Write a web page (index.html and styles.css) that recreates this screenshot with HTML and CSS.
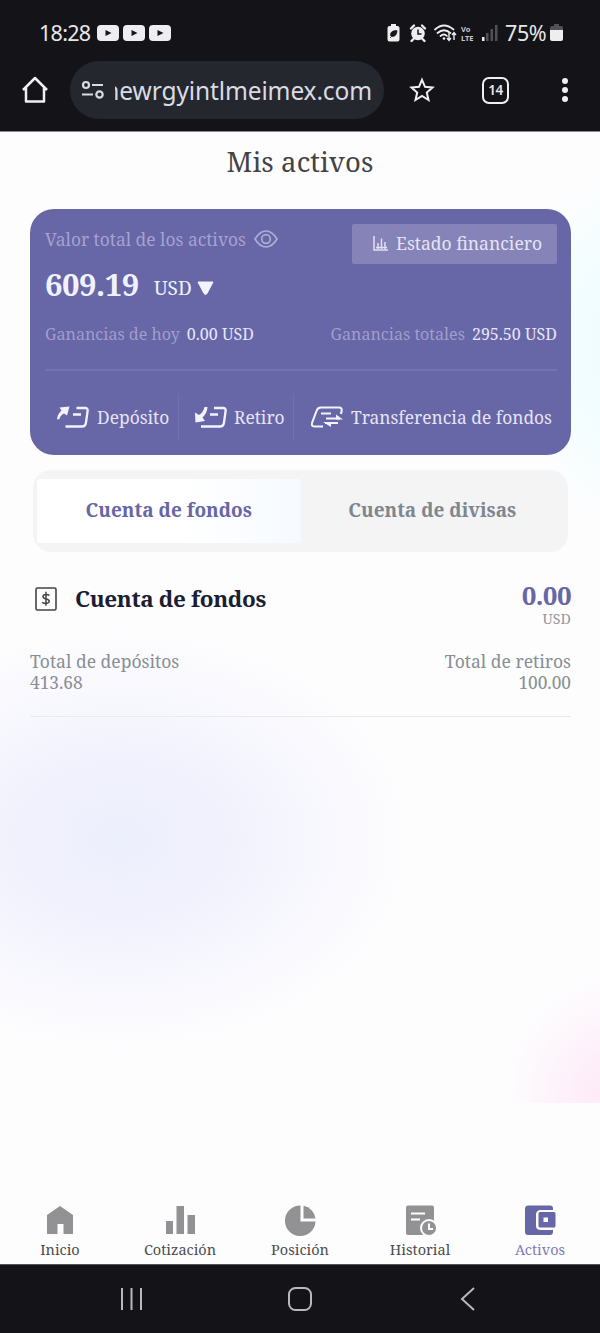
FILE: index.html
```html
<!DOCTYPE html>
<html lang="es">
<head>
<meta charset="utf-8">
<title>Mis activos</title>
<link rel="stylesheet" href="styles.css">
</head>
<body>
<div class="phone">
  <header class="chrome">
    <div class="status">
      <span class="clock">18:28</span>
      <svg class="yt" width="74" height="16" viewBox="0 0 74 16"><g fill="#eeeef0"><rect width="22" height="16" rx="4"/><rect x="26" width="22" height="16" rx="4"/><rect x="52" width="22" height="16" rx="4"/></g><g fill="#15151a"><path d="M8.500 5l6 3-6 3zM34.500 5l6 3-6 3zM60.500 5l6 3-6 3z"/></g></svg>
      <svg class="signals" width="112" height="20" viewBox="0 0 112 20">
        <g fill="#eeeef0"><path d="M4 1h5v2h1.500q2 0 2 2v11.500q0 2-2 2h-8q-2 0-2-2v-11.500q0-2 2-2H4z"/></g>
        <path d="M3.500 12.500q-.5-5 6.500-5 0 6-5 6zM3 15l4-4" fill="#15151a" stroke="#15151a" stroke-width=".7"/>
        <circle cx="31" cy="10.500" r="6.800" fill="#eeeef0"/><path d="M24 5.500l3-3M38 5.500l-3-3M26.500 16l-2 2M35.500 16l2 2" stroke="#eeeef0" stroke-width="2.400" stroke-linecap="round"/><path d="M31 6.500v4.500h3.500" fill="none" stroke="#15151a" stroke-width="1.500"/>
        <g fill="none" stroke="#eeeef0" stroke-width="1.700" stroke-linecap="round"><path d="M48 6.500q9-8 18.500 0M50.500 10q6.500-5.500 13 0M53.500 13q3.500-3 6.500 0"/></g><circle cx="57" cy="15.500" r="1.300" fill="#eeeef0"/>
        <path d="M62 10v7m-2-2l2 2.500 2-2.500M67 17v-7m-2 2l2-2.500 2 2.500" fill="none" stroke="#eeeef0" stroke-width="1.400"/>
        <text class="volte" x="74" y="9">Vo</text><text class="volte" x="74" y="17.500">LTE</text>
        <path d="M95 14h2.500v4H95z" fill="#eeeef0"/><path d="M99 10h2.500v8H99zM103.500 6h2.500v12h-2.500zM108 2h2.500v16H108z" fill="#505055"/>
      </svg>
      <span class="percent">75%</span>
      <svg class="battery" width="13" height="17" viewBox="0 0 13 17"><path d="M4 0h5v2h2q2 0 2 2v3H0V4q0-2 2-2h2z" fill="#505055"/><path d="M0 6h13v9q0 2-2 2H2q-2 0-2-2z" fill="#eeeef0"/></svg>
    </div>
    <div class="toolbar">
      <svg class="home" width="28" height="28" viewBox="0 0 28 28" fill="none" stroke="#f0f0f2" stroke-width="2.500" stroke-linejoin="round"><path d="M2 14L14 2l12 12M5 12v13.500h18V12"/></svg>
      <div class="urlbar">
        <svg width="24" height="20" viewBox="0 0 24 20" fill="none" stroke="#d8dbe2" stroke-width="2.200"><circle cx="5" cy="5" r="3"/><path d="M11 5h11M1 14.500h11"/><circle cx="18.500" cy="14.500" r="3.200"/></svg>
        <div class="urlclip"><span class="url">newrgyintlmeimex.com</span></div>
      </div>
      <svg class="star" width="26" height="26" viewBox="0 0 26 26" fill="none" stroke="#f0f0f2" stroke-width="2"><path d="M13 2.800l3 7 7.500.7-5.700 5 1.700 7.500-6.500-4-6.500 4 1.700-7.500-5.700-5 7.500-.7z"/></svg>
      <div class="count">14</div>
      <svg class="more" width="8" height="26" viewBox="0 0 8 26" fill="#f0f0f2"><circle cx="4" cy="4" r="3"/><circle cx="4" cy="13" r="3"/><circle cx="4" cy="22" r="3"/></svg>
    </div>
  </header>

  <main class="app">
    <h1 class="title"><span>Mis activos</span></h1>
    <section class="card">
      <div class="card-top">
        <div>
          <div class="label-row"><span class="total-label">Valor total de los activos</span>
            <svg width="24" height="18" viewBox="0 0 24 18" fill="none" stroke="#b0add5" stroke-width="1.700"><path d="M1 9Q6 1 12 1t11 8q-5 8-11 8T1 9z"/><circle cx="12" cy="9" r="4.300"/></svg></div>
          <div class="balance-row"><span class="balance">609.19</span><span class="currency">USD</span><svg width="17" height="15" viewBox="0 0 17 15"><path d="M1 1h15L10 12.500q-1.500 2-3 0z" fill="#f2f5ff" stroke="#f2f5ff" stroke-linejoin="round"/></svg></div>
        </div>
        <div class="report"><svg width="16" height="16" viewBox="0 0 16 16" fill="none" stroke="#e2e0f3" stroke-width="1.500"><path d="M1 1v14h14M5 14V8M8.500 14V3.500M12 14V7"/><path d="M3 12.500h11"/></svg><span>Estado financiero</span></div>
      </div>
      <div class="gains"><p><span class="dim">Ganancias de hoy</span><span class="lit">0.00 USD</span></p><p><span class="dim">Ganancias totales</span><span class="lit">295.50 USD</span></p></div>
      <div class="actions">
        <div class="action a1"><svg width="32" height="22" viewBox="0 0 32 22" fill="none" stroke="#f2f3ff" stroke-width="2.300"><path d="M0 13.500Q.5 8 4.500 4.500L2.500 1.500 12.500 0.500 10 9.500 7 7.500Q3 9.500 2.500 13z" fill="#f2f3ff" stroke="none"/><path d="M19.500 2H28q3 0 2.600 3L29 16.500q-.5 4-4 4H8.500M16 8.500h8"/></svg><span>Depósito</span></div>
        <div class="action a2"><svg width="32" height="22" viewBox="0 0 32 22" fill="none" stroke="#f2f3ff" stroke-width="2.300"><path d="M9.500 1h3q-.5 6.500-5 10.500l2.500 3.500-9.500 1.500L0 6.500l4 2.500Q8.500 6 9.500 1z" fill="#f2f3ff" stroke="none"/><path d="M19 2h9q3 0 2.600 3L29 16.500q-.5 4-4 4H6M15 8.500h8"/></svg><span>Retiro</span></div>
        <div class="action a3"><svg width="32" height="22" viewBox="0 0 32 22" fill="none" stroke="#f2f3ff" stroke-width="2.100"><path d="M12 20.500H4q-4 0-3-3.500L5.500 5q1-3.500 4.500-3.500h18q3.500 0 2.500 4L30 8M10 7.500h10M15 12.500h14M27 17H14"/><path d="M25 8.500l7 5h-7zM12 16h8v5z" fill="#f2f3ff" stroke="none"/></svg><span>Transferencia de fondos</span></div>
      </div>
    </section>
    <div class="tabs"><div class="tab active"><span>Cuenta de fondos</span></div><div class="tab"><span>Cuenta de divisas</span></div></div>
    <section class="account">
      <div class="account-head">
        <svg class="money" width="22" height="24" viewBox="0 0 22 24"><rect x="1" y="1" width="20" height="22" rx="1.500" fill="none" stroke="#444" stroke-width="1.600"/><path d="M14.500 8.500Q13.500 7.500 11 7.500q-3 0-3 2t3 2.400 3.200 2.300-3.200 2.300q-2.500 0-3.800-1.300M11 4.800v14" fill="none" stroke="#444" stroke-width="1.500"/></svg>
        <h2><span>Cuenta de fondos</span></h2>
        <div class="sum"><span class="zero">0.00</span><span class="unit">USD</span></div>
      </div>
      <div class="totals"><div><span>Total de depósitos</span><br><span class="num">413.68</span></div><div class="right"><span>Total de retiros</span><br><span class="num">100.00</span></div></div>
    </section>
    <nav class="nav">
      <div class="item"><svg width="32" height="32" viewBox="0 0 32 32" fill="#929294"><path d="M16 1l13 9v19H19.500V19h-6v10H3V10z"/></svg><span>Inicio</span></div>
      <div class="item"><svg width="32" height="32" viewBox="0 0 32 32" fill="#929294"><path d="M2 16h7v13H2zM12.500 1H20v28h-7.500zM23.500 10H31v19h-7.500z"/></svg><span>Cotización</span></div>
      <div class="item"><svg width="32" height="32" viewBox="0 0 32 32" fill="#929294"><path d="M16.500 .5V16.500h15A15.300 15.300 0 1 1 16.500 .5z"/><path d="M19.500 .8a14.500 14.500 0 0 1 12 12.700h-12z"/></svg><span>Posición</span></div>
      <div class="item"><svg width="32" height="32" viewBox="0 0 32 32"><rect x="2" y=".5" width="28" height="29.500" rx="2" fill="#929294"/><path d="M7 8.500h14M7 14.500h9" stroke="#fff" stroke-width="2.200"/><circle cx="25" cy="23" r="9" fill="#fdfdfe"/><circle cx="25" cy="23" r="7" fill="#929294"/><path d="M25 18.500V24h4" fill="none" stroke="#fff" stroke-width="2"/></svg><span>Historial</span></div>
      <div class="item on"><svg width="32" height="32" viewBox="0 0 32 32"><path d="M4 .5h22q3 0 3 3V5H17q-5 0-5 5v11q0 4 5 4h12v1.500q0 3.500-3 3.500H4q-3 0-3-3v-23q0-3.500 3-3.500z" fill="#6766a7"/><rect x="14.500" y="7" width="17" height="15.500" rx="1.500" fill="#6766a7"/><rect x="19.500" y="12.500" width="4.500" height="4.500" fill="#fff"/></svg><span>Activos</span></div>
    </nav>
  </main>
  <footer class="system">
    <svg width="24" height="24" viewBox="0 0 24 24" stroke="#b9b9bc" stroke-width="2"><path d="M2 1v22M11.500 1v22M21 1v22"/></svg>
    <svg width="24" height="24" viewBox="0 0 24 24" fill="none" stroke="#b9b9bc" stroke-width="2"><rect x="1" y="1" width="22" height="22" rx="6.500"/></svg>
    <svg width="24" height="24" viewBox="0 0 24 24" fill="none" stroke="#b9b9bc" stroke-width="2"><path d="M19 1L7 12l12 11"/></svg>
  </footer>
</div>
</body>
</html>
```
FILE: styles.css
```css
* { box-sizing: border-box; }
body { margin: 0; background: #fdfdfe; }
svg { display: block; flex: none; }
span { white-space: nowrap; }
h1, h2, p { margin: 0; font-weight: 400; }
.phone { width: 600px; height: 1333px; display: flex; flex-direction: column; font-family: "Noto Serif", "DejaVu Serif Condensed", "DejaVu Serif", serif; font-stretch: condensed; overflow: hidden; }

.chrome { height: 132px; flex: none; background: #141418; border-bottom: 1px solid #8b8b8d; font-family: "Noto Sans", sans-serif; color: #e8e8ea; }
.status { height: 61px; padding: 4px 37px 0 39px; display: flex; align-items: center; }
.clock { font-size: 21.500px; width: 58px; letter-spacing: -.7px; margin-top: -1px; }
.signals { margin-left: auto; }
.percent { font-size: 21.500px; margin-left: 6px; width: 44px; letter-spacing: -.4px; margin-top: -1px; }
.battery { margin-left: 1px; }
.volte { font: 700 7.500px "Noto Sans", sans-serif; fill: #c8c8ca; }
.toolbar { height: 58px; padding-left: 21px; display: flex; align-items: center; }
.urlbar { width: 314px; height: 58px; margin-left: 21px; padding-left: 11px; border-radius: 29px; background: #25272f; display: flex; align-items: center; gap: 10px; }
.urlclip { width: 257px; overflow: hidden; display: flex; justify-content: flex-end; }
.url { font-size: 24.500px; line-height: 34px; padding-top: 1px; letter-spacing: -.12px; color: #d9dce3; }
.star { margin-left: 25px; }
.count { width: 27px; height: 27px; margin-left: 47px; border: 2.500px solid #f0f0f2; border-radius: 7px; font-size: 13.500px; font-weight: 600; letter-spacing: -.5px; line-height: 22px; text-align: center; }
.more { margin-left: 52px; }

.app { flex: 1; display: flex; flex-direction: column; background:
  radial-gradient(ellipse 120px 130px at 620px 971px, #fdeaf6 0, #fdeefa 35%, #fdf7fc 70%, rgba(253,253,254,0) 100%) no-repeat 0 0 / 100% 971px,
  radial-gradient(ellipse 290px 208px at 120px 708px, #ecf0fc 0, #f1f1fd 35%, #f8f8fe 72%, rgba(253,253,254,0) 100%),
  radial-gradient(ellipse 130px 180px at 640px 215px, #ecfbff 0, #f2fdff 50%, rgba(253,253,254,0) 100%), #fdfdfe; }
.title { height: 77px; padding-top: 10px; text-align: center; font-size: 27.500px; letter-spacing: .1px; line-height: 39px; color: #434346; }
.card { width: 541px; height: 246px; flex: none; margin-left: 30px; padding: 15px 14px 0 15px; border-radius: 24px; background: #6766a7; color: #e6e4f6; }
.card-top { height: 95px; display: flex; justify-content: space-between; }
.label-row { height: 29px; display: flex; align-items: center; gap: 8px; color: #a5a3cf; font-size: 17.400px; }
.balance-row { height: 62px; display: flex; align-items: center; color: #f0f2ff; }
.balance { font-size: 31px; font-weight: 700; letter-spacing: -.5px; width: 109px; }
.currency { font-size: 19px; width: 43px; padding-top: 8px; }
.balance-row svg { margin-top: 9px; }
.report { width: 205px; height: 40px; background: #8583b7; border-radius: 2px; display: flex; align-items: center; gap: 7px; padding: 0 0 2px 21px; font-size: 17.500px; }
.gains { height: 52px; padding-top: 4px; border-bottom: 2px solid #7473b1; display: flex; justify-content: space-between; line-height: 22px; font-size: 16.080px; }
.gains p { display: flex; gap: 7px; }
.dim { color: #a09ecb; }
.lit { color: #e8e7fa; }
.actions { height: 92px; display: flex; align-items: center; }
.action { height: 46px; display: flex; align-items: center; gap: 8px; font-size: 17.400px; }
.a1 { width: 134px; padding-left: 12px; border-right: 1px solid #7271ae; }
.a2 { width: 115px; padding-left: 16px; gap: 7px; border-right: 1px solid #7271ae; }
.a3 { padding-left: 17px; }

.tabs { width: 535px; height: 82px; flex: none; margin: 15px 0 0 33px; padding: 9px 4px; border-radius: 18px; background: #f4f4f5; display: flex; }
.tab { flex: 1; display: flex; align-items: center; justify-content: center; color: #7f878e; font-size: 19px; font-weight: 700; padding-bottom: 2px; }
.tab.active { color: #6766a7; background: linear-gradient(90deg, #fff 55%, #f6faff); border-radius: 3px; }

.account { margin: 28px 29px 0 30px; height: 137px; border-bottom: 1px solid #eaeaec; }
.account-head { display: flex; height: 71px; }
.money { margin: 7px 0 0 5px; }
h2 { font-size: 22.500px; letter-spacing: -.38px; font-weight: 700; line-height: 37px; color: #1b1d33; margin-left: 18px; }
.sum { margin-left: auto; display: flex; flex-direction: column; align-items: flex-end; }
.zero { font-size: 26px; letter-spacing: -.6px; line-height: 31px; font-weight: 700; color: #6766a7; }
.unit { font-size: 14.300px; line-height: 16px; color: #92979c; }
.totals { display: flex; justify-content: space-between; font-size: 17.500px; line-height: 21px; color: #878e94; }
.num { font-size: 17.300px; }
.right { text-align: right; }

.nav { margin-top: auto; height: 59px; display: flex; }
.item { width: 120.300px; display: flex; flex-direction: column; align-items: center; font-size: 14.500px; line-height: 25px; color: #4b4b4e; }
.item.on { color: #7d7bae; }
.system { height: 69px; flex: none; background: #141418; border-top: 1px solid #55555a; display: flex; align-items: center; padding-left: 120px; gap: 143.500px; }
```
